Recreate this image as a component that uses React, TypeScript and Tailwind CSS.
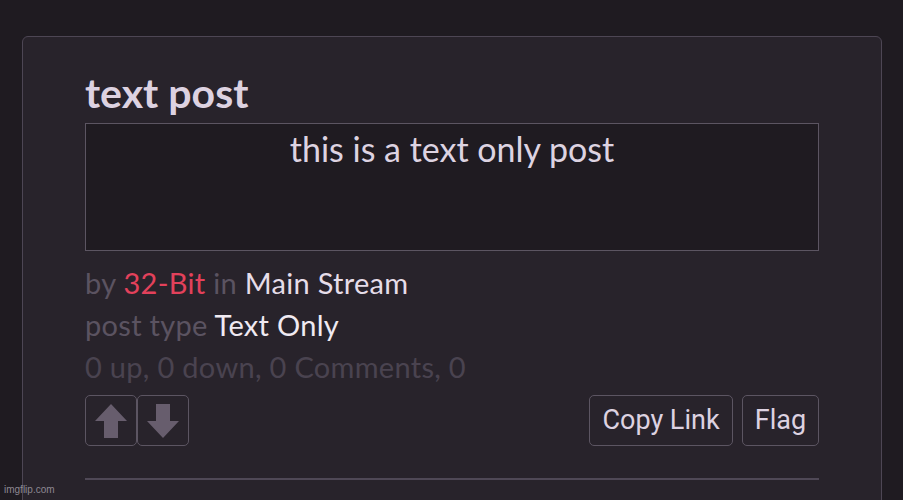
import React from 'react';

function Arrow({ down }: { down?: boolean }) {
  return (
    <svg width="32" height="34" viewBox="0 0 32 34" className={down ? 'rotate-180' : ''}>
      <polygon points="16,0 32,17 23,17 23,34 9,34 9,17 0,17" fill="#675d6d" />
    </svg>
  );
}

export default function App() {
  return (
    <div className="relative h-[500px] w-[903px] overflow-hidden bg-[#1f1b21] pt-[36px] pl-[22px] font-['Lato',sans-serif]">
      <div className="h-[480px] w-[860px] rounded-[6px] border border-[#4d4654] bg-[#28232b] px-[62px] pt-[30px]">
        <h1 className="text-[41px] font-bold leading-[52px] text-[#ddd2e1]">text post</h1>
        <div className="mt-[4px] h-[128px] border border-[#5c5562] bg-[#1f1b21] pt-[4px] text-center text-[34px] leading-[42px] text-[#ddd3e1]">
          this is a text only post
        </div>
        <div className="mt-[11px] flex flex-col text-[29px] leading-[42px] tracking-[0.3px]">
          <p className="text-[#5b5361]">
            by <span className="text-[#e3415b]">32-Bit</span> in{' '}
            <span className="text-[#e6dde9]">Main Stream</span>
          </p>
          <p className="text-[#5b5361]">
            post type <span className="text-[#f0eaf2]">Text Only</span>
          </p>
          <p className="text-[#4a4350]">0 up, 0 down, 0 Comments, 0</p>
        </div>
        <div className="mt-[7px] flex items-center">
          <div className="flex">
            <button className="flex h-[51px] w-[52px] items-center justify-center rounded-[5px] border border-[#5c5562]">
              <Arrow />
            </button>
            <button className="flex h-[51px] w-[52px] items-center justify-center rounded-[5px] border border-[#5c5562]">
              <Arrow down />
            </button>
          </div>
          <div className="ml-auto flex gap-[9px] font-['Roboto',sans-serif] text-[27px] text-[#ddd2e1]">
            <button className="h-[51px] w-[144px] rounded-[5px] border border-[#5c5562]">Copy Link</button>
            <button className="h-[51px] w-[77px] rounded-[5px] border border-[#5c5562]">Flag</button>
          </div>
        </div>
        <div className="mt-[32px] h-[2px] bg-[#4f4856]" />
      </div>
      <span className="absolute bottom-[3px] left-[4px] font-['Liberation_Sans',sans-serif] text-[10px] text-[#8d8892]">imgflip.com</span>
    </div>
  );
}
